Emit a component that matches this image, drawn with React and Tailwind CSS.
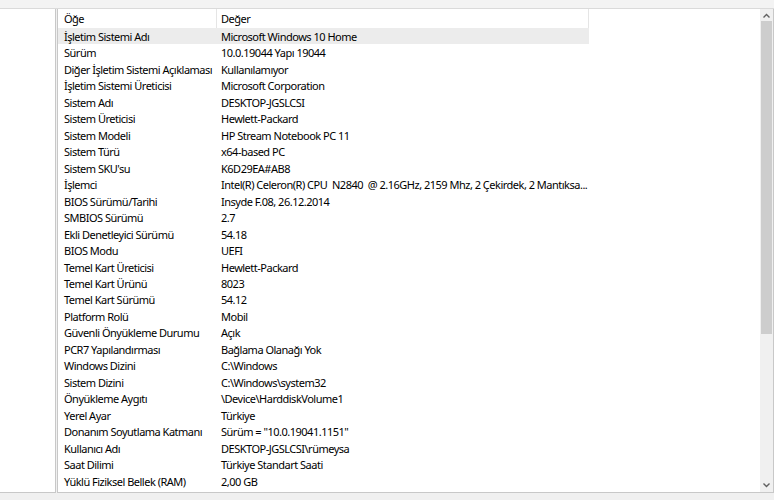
const rows = [
  ["İşletim Sistemi Adı", "Microsoft Windows 10 Home"],
  ["Sürüm", "10.0.19044 Yapı 19044"],
  ["Diğer İşletim Sistemi Açıklaması", "Kullanılamıyor"],
  ["İşletim Sistemi Üreticisi", "Microsoft Corporation"],
  ["Sistem Adı", "DESKTOP-JGSLCSI"],
  ["Sistem Üreticisi", "Hewlett-Packard"],
  ["Sistem Modeli", "HP Stream Notebook PC 11"],
  ["Sistem Türü", "x64-based PC"],
  ["Sistem SKU'su", "K6D29EA#AB8"],
  ["İşlemci", "Intel(R) Celeron(R) CPU  N2840  @ 2.16GHz, 2159 Mhz, 2 Çekirdek, 2 Mantıksa..."],
  ["BIOS Sürümü/Tarihi", "Insyde F.08, 26.12.2014"],
  ["SMBIOS Sürümü", "2.7"],
  ["Ekli Denetleyici Sürümü", "54.18"],
  ["BIOS Modu", "UEFI"],
  ["Temel Kart Üreticisi", "Hewlett-Packard"],
  ["Temel Kart Ürünü", "8023"],
  ["Temel Kart Sürümü", "54.12"],
  ["Platform Rolü", "Mobil"],
  ["Güvenli Önyükleme Durumu", "Açık"],
  ["PCR7 Yapılandırması", "Bağlama Olanağı Yok"],
  ["Windows Dizini", "C:\\Windows"],
  ["Sistem Dizini", "C:\\Windows\\system32"],
  ["Önyükleme Aygıtı", "\\Device\\HarddiskVolume1"],
  ["Yerel Ayar", "Türkiye"],
  ["Donanım Soyutlama Katmanı", "Sürüm = \"10.0.19041.1151\""],
  ["Kullanıcı Adı", "DESKTOP-JGSLCSI\\rümeysa"],
  ["Saat Dilimi", "Türkiye Standart Saati"],
  ["Yüklü Fiziksel Bellek (RAM)", "2,00 GB"],
];

export default function App() {
  return (
    <div
      className="flex h-[500px] w-[774px] flex-col overflow-hidden bg-[#f0f0f0] text-[11px] tracking-[-0.5px] text-black"
      style={{ fontFamily: '"Segoe UI", "Noto Sans", sans-serif' }}
    >
      <div className="h-[9px] shrink-0 border-b border-[#dadada] bg-[#f3f3f3]" />
      <div className="flex h-[484px] shrink-0 gap-[1px]">
        <div className="w-[56px] shrink-0 border-r border-b border-[#c8c8c8] bg-white" />
        <div className="flex min-w-0 flex-1 border-x border-b border-[#c8c8c8] bg-white">
          <div className="min-w-0 flex-1 overflow-hidden">
            <div className="flex h-[19px] w-[531px] items-center">
              <div className="flex h-full w-[159px] items-center border-r border-[#e5e5e5] pt-[2px] pl-[6px]">
                Öğe
              </div>
              <div className="flex h-full flex-1 items-center border-r border-[#e5e5e5] pt-[2px] pl-[4px]">
                Değer
              </div>
            </div>
            {rows.map(([k, v], i) => (
              <div
                key={k}
                className={`flex h-[16.48px] items-center whitespace-pre pt-[2px] ${
                  i === 0 ? "w-[531px] bg-[#ececec]" : ""
                }`}
              >
                <div className="w-[159px] shrink-0 pl-[6px]">{k}</div>
                <div className="pl-[4px]">{v}</div>
              </div>
            ))}
          </div>
          <div className="flex w-[13px] shrink-0 flex-col bg-[#f0f0f0]">
            <div className="flex h-[12px] items-center justify-center text-[#606060]">
              <svg width="7" height="5" viewBox="0 0 7 5">
                <path d="M0.5 4.5 L3.5 1.5 L6.5 4.5" fill="none" stroke="currentColor" strokeWidth="1.4" />
              </svg>
            </div>
            <div className="mx-[1px] h-[313px] bg-[#cdcdcd]" />
            <div className="flex-1" />
            <div className="flex h-[14px] items-center justify-center text-[#606060]">
              <svg width="7" height="5" viewBox="0 0 7 5">
                <path d="M0.5 0.5 L3.5 3.5 L6.5 0.5" fill="none" stroke="currentColor" strokeWidth="1.4" />
              </svg>
            </div>
          </div>
        </div>
      </div>
      <div className="flex-1 bg-[#f0f0f0]" />
    </div>
  );
}
